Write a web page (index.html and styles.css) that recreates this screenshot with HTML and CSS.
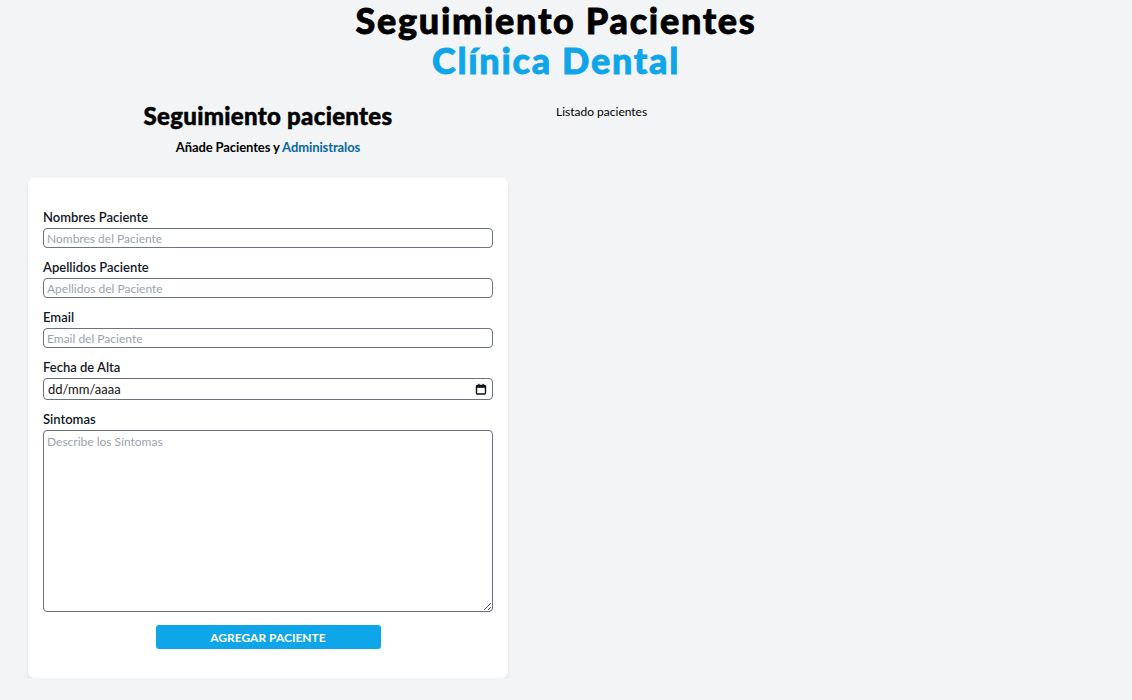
FILE: index.html
```html
<!DOCTYPE html>
<html lang="es">
<head>
<meta charset="utf-8">
<title>Seguimiento Pacientes</title>
<link rel="stylesheet" href="styles.css">
</head>
<body>
<header class="header">
  <h1 class="title">Seguimiento Pacientes <span class="title-accent">Clínica Dental</span></h1>
</header>
<main class="main">
  <section class="form-col">
    <h2 class="form-title">Seguimiento pacientes</h2>
    <p class="form-sub">Añade Pacientes y <span class="link">Administralos</span></p>
    <form class="card">
      <div class="field">
        <label class="label" for="nombre">Nombres Paciente</label>
        <input class="input" id="nombre" type="text" placeholder="Nombres del Paciente">
      </div>
      <div class="field">
        <label class="label" for="apellido">Apellidos Paciente</label>
        <input class="input" id="apellido" type="text" placeholder="Apellidos del Paciente">
      </div>
      <div class="field">
        <label class="label" for="email">Email</label>
        <input class="input" id="email" type="email" placeholder="Email del Paciente">
      </div>
      <div class="field">
        <label class="label" for="fecha">Fecha de Alta</label>
        <div class="input date" id="fecha">
          <span class="date-text">dd/mm/aaaa</span>
          <svg class="cal" width="12" height="12" viewBox="0 0 12 12" aria-hidden="true">
            <rect x="1.5" y="2.5" width="9" height="8.5" rx="1" fill="none" stroke="#111" stroke-width="1.4"/>
            <rect x="1.5" y="2.5" width="9" height="2.3" fill="#111"/>
            <rect x="3.2" y="0.8" width="1.3" height="2" fill="#111"/>
            <rect x="7.5" y="0.8" width="1.3" height="2" fill="#111"/>
          </svg>
        </div>
      </div>
      <div class="field">
        <label class="label" for="sintomas">Sintomas</label>
        <textarea class="input textarea" id="sintomas" placeholder="Describe los Síntomas"></textarea>
      </div>
      <button class="btn" type="button">Agregar Paciente</button>
    </form>
  </section>
  <section class="list-col">
    <p class="list-title">Listado pacientes</p>
  </section>
</main>
</body>
</html>
```
FILE: styles.css
```css
* { box-sizing: border-box; }
body {
  margin: 0;
  background: #f3f4f6;
  font-family: Lato, "Open Sans", sans-serif;
  color: #000;
}
.header { margin-right: 20px; }
.title {
  margin: 0;
  font-size: 36px;
  line-height: 40px;
  font-weight: 900;
  letter-spacing: 1.7px;
  -webkit-text-stroke: 0.8px currentColor;
  text-align: center;
}
.title-accent { display: block; color: #0ea5e9; }
.main {
  display: flex;
  margin-top: 20px;
  padding-left: 28px;
}
.form-col { width: 480px; }
.form-title {
  margin: 0;
  font-size: 24px;
  line-height: 32px;
  font-weight: 900;
  letter-spacing: 0.3px;
  -webkit-text-stroke: 0.5px currentColor;
  text-align: center;
}
.form-sub {
  margin: 5px 0 0;
  font-size: 13px;
  line-height: 20px;
  font-weight: 700;
  letter-spacing: -0.1px;
  text-align: center;
}
.link { color: #0369a1; }
.card {
  margin-top: 21px;
  background: #fff;
  border-radius: 6px;
  box-shadow: 0 4px 6px -1px rgba(0,0,0,.08), 0 2px 4px -2px rgba(0,0,0,.08);
  padding: 30px 15px 29px;
}
.field { margin-bottom: 10px; }
.label {
  display: block;
  font-size: 13px;
  line-height: 18px;
  font-weight: 600;
  color: #111827;
  margin-bottom: 2px;
}
.input {
  display: block;
  width: 100%;
  height: 20px;
  margin: 0;
  padding: 0 3px;
  border: 1px solid #6b7280;
  border-radius: 4px;
  font-family: inherit;
  font-size: 12px;
  color: #111;
  background: #fff;
  outline: none;
}
.input::placeholder { color: #9ca3af; }
.date {
  height: 22px;
  display: flex;
  align-items: center;
  justify-content: space-between;
  padding: 0 5px 0 4px;
}
.date-text { font-size: 13px; }
.textarea {
  height: 182px;
  padding: 3px 3px;
  resize: vertical;
  line-height: 16px;
}
.btn {
  display: block;
  width: 50%;
  height: 24px;
  margin: 13px auto 0;
  border: 0;
  border-radius: 3px;
  background: #0ea5e9;
  color: #fff;
  font-family: inherit;
  font-size: 12px;
  font-weight: 700;
  text-transform: uppercase;
  padding: 0;
}
.list-col { margin-left: 48px; }
.list-title {
  margin: 2px 0 0;
  font-size: 12px;
  line-height: 20px;
}
```
